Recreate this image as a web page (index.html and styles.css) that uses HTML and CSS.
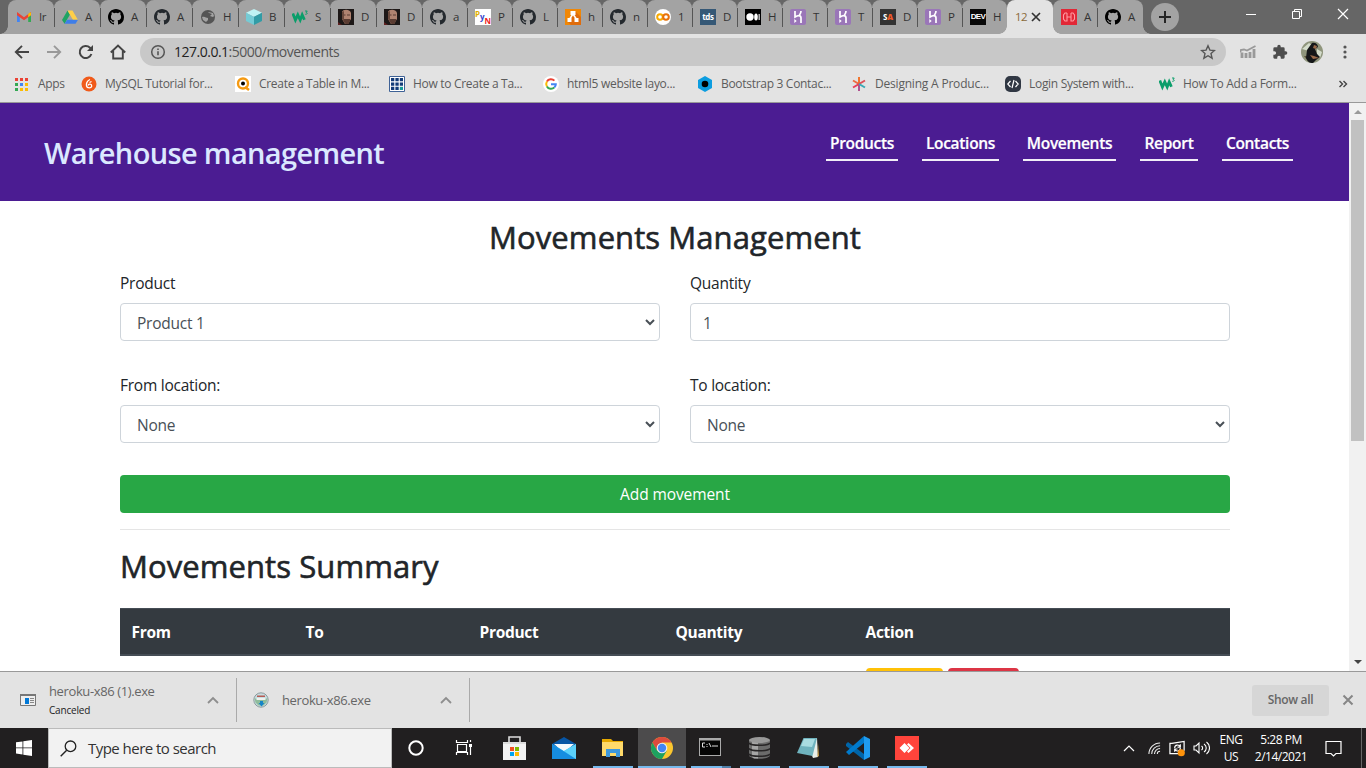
FILE: index.html
```html
<!DOCTYPE html>
<html lang="en">
<head>
<meta charset="utf-8">
<title>Warehouse management</title>
<link rel="stylesheet" href="styles.css">
</head>
<body>
<svg class="defs" aria-hidden="true">
  <symbol id="github" viewBox="0 0 16 16"><path d="M8 0C3.58 0 0 3.58 0 8c0 3.54 2.29 6.53 5.47 7.59.4.07.55-.17.55-.38 0-.19-.01-.82-.01-1.49-2.01.37-2.53-.49-2.69-.94-.09-.23-.48-.94-.82-1.13-.28-.15-.68-.52-.01-.53.63-.01 1.08.58 1.23.82.72 1.21 1.87.87 2.33.66.07-.52.28-.87.51-1.07-1.78-.2-3.64-.89-3.64-3.95 0-.87.31-1.59.82-2.15-.08-.2-.36-1.02.08-2.12 0 0 .67-.21 2.2.82a7.6 7.6 0 0 1 4 0c1.53-1.04 2.2-.82 2.2-.82.44 1.1.16 1.92.08 2.12.51.56.82 1.27.82 2.15 0 3.07-1.87 3.75-3.65 3.95.29.25.54.73.54 1.48 0 1.07-.01 1.93-.01 2.2 0 .21.15.46.55.38A8 8 0 0 0 16 8c0-4.42-3.58-8-8-8z"/></symbol>
  <symbol id="w3" viewBox="0 0 16 16"><path d="M.8 4.5 3.4 11 5.8 5.8 8.2 11l2-5.2 2.2 5" fill="none" stroke="#0a9e6a" stroke-width="2.8"/><path d="M13 2h2.2l-1 1.5c1.5.2 1.3 2-.9 1.8" fill="none" stroke="#0a9e6a"/></symbol>
  <symbol id="face" viewBox="0 0 16 16"><path fill="#1d1817" d="M0 0h16v16H0z"/><path fill="#b08370" d="M4 3C5 0 12 0 13 4v6l-3 5H7l-3-5z"/><path fill="#5a3c32" d="M5 10h7v2L10.500 15h-3L5 12zM5 5.500h2.500v1H5zm4 0h3v1H9z"/><path fill="#6b4a3d" d="M4 3v7l2 3V2z"/><path fill="#5d2020" d="m0 13 4 3H0z"/></symbol>
  <symbol id="heroku" viewBox="0 0 16 16"><rect width="16" height="16" rx="2" fill="#9a76b8"/><path d="M5 2v6c3-2 6-2 6 1v5M11 2c0 2-.7 3-1.500 4" fill="none" stroke="#fff" stroke-width="1.700"/><path d="m4.300 10 2.400 2-2.400 2z" fill="#fff"/></symbol>
  <symbol id="up" viewBox="0 0 12 8"><path d="m1 7 5-5 5 5" fill="none" stroke="#8e8e8e" stroke-width="1.800"/></symbol>
</svg>

<div class="tabstrip">
  <div class="tab lead"><svg viewBox="0 0 16 16"><path d="M1 4v9h2.800V7z" fill="#4285f4"/><path d="M15 4v9h-2.800V7z" fill="#34a853"/><path d="m1 3 7 5.200L15 3v3.200l-7 5-7-5z" fill="#ea4335"/><path d="m12.200 5 2-1.800L15 4v2.200l-2.800 2z" fill="#fbbc04"/></svg><span>Ir</span></div>
  <div class="tab"><svg viewBox="0 0 16 16"><path d="M5.500 1.500 0 11l2.600 3.800L8 5.500z" fill="#1fa463"/><path d="M5.500 1.500h5L16 11h-5z" fill="#ffcf48"/><path d="M5.200 10.700H16l-2.500 4.100h-11z" fill="#3f7ee8"/></svg><span>A</span></div>
  <div class="tab"><svg><use href="#github"/></svg><span>A</span></div>
  <div class="tab"><svg class="slate"><use href="#github"/></svg><span>A</span></div>
  <div class="tab"><svg viewBox="0 0 16 16"><circle cx="8" cy="8" r="7" fill="#555"/><path d="M2 8c3-1 4 1 6 1v2l-2 2-3-2zM8 3l1 1 3 1-2 2 3 1 1-1-1-3z" fill="#a3a3a3"/></svg><span>H</span></div>
  <div class="tab"><svg viewBox="0 0 16 16"><path d="m8 0 8 3.700L8 8 0 3.700z" fill="#bff3f4"/><path d="m0 3.700 8 4.100V16l-8-4z" fill="#75cbd5"/><path d="m16 3.700-8 4.100V16l8-4z" fill="#319ca6"/></svg><span>B</span></div>
  <div class="tab"><svg><use href="#w3"/></svg><span>S</span></div>
  <div class="tab"><svg><use href="#face"/></svg><span>D</span></div>
  <div class="tab"><svg><use href="#face"/></svg><span>D</span></div>
  <div class="tab n"><svg class="slate"><use href="#github"/></svg><span>a</span></div>
  <div class="tab n"><i class="fav pyn"><b>P</b><b>y</b><b>N</b></i><span>P</span></div>
  <div class="tab n"><svg class="slate"><use href="#github"/></svg><span>L</span></div>
  <div class="tab n"><svg viewBox="0 0 16 16"><path fill="#f08705" d="M0 0h16v16H0z"/><path fill="#df6c0c" d="m10 2 6 6v8H6l-3-3z"/><path d="m8 5-4 6m4-6 4 6" stroke="#fff" stroke-width="1.500"/><path d="M5.500 2h5v4h-5zM2.500 9h4v4h-4zm7 0h4v4h-4z" fill="#fff"/></svg><span>h</span></div>
  <div class="tab n"><svg class="slate"><use href="#github"/></svg><span>n</span></div>
  <div class="tab n"><svg viewBox="0 0 16 16"><circle cx="8" cy="8" r="8" fill="#fff"/><g fill="none" stroke-width="2"><circle cx="5" cy="8" r="2.800" stroke="#f9ab00"/><circle cx="11" cy="8" r="2.800" stroke="#e8710a"/></g></svg><span>1</span></div>
  <div class="tab n"><i class="fav tds">tds</i><span>D</span></div>
  <div class="tab n"><svg viewBox="0 0 16 16"><path d="M0 0h16v16H0z"/><g fill="#fff"><circle cx="5" cy="8" r="3.700"/><ellipse cx="11" cy="8" rx="1.800" ry="3.500"/><path d="M13.600 5h1.100v6h-1.100z"/></g></svg><span>H</span></div>
  <div class="tab n"><svg><use href="#heroku"/></svg><span>T</span></div>
  <div class="tab n"><svg><use href="#heroku"/></svg><span>T</span></div>
  <div class="tab n"><i class="fav sa">S<b>A</b></i><span>D</span></div>
  <div class="tab n"><svg><use href="#heroku"/></svg><span>P</span></div>
  <div class="tab n last"><i class="fav dev">DEV</i><span>H</span></div>
  <div class="tab active"><span class="url-title">12</span><svg class="close" viewBox="0 0 10 10"><path d="m1 1 8 8m0-8L1 9" stroke="#333" stroke-width="1.700"/></svg></div>
  <div class="tab m"><svg viewBox="0 0 16 16"><path fill="#e22736" d="M0 0h16v16H0z"/><path d="M6 4H4L2.500 6v4L4 12h2V4m4 0h2l1.500 2v4L12 12h-2V4M6 8h4" fill="none" stroke="#ff9aa0" stroke-width="1.100"/></svg><span>A</span></div>
  <div class="tab last tail"><svg><use href="#github"/></svg><span>A</span></div>
  <div class="newtab"><svg viewBox="0 0 14 14"><path d="M7 1v12M1 7h12" stroke="#252525" stroke-width="2"/></svg></div>
  <div class="winbtns">
    <svg viewBox="0 0 12 12"><path d="M1 6.500h10" stroke="#fff"/></svg>
    <svg viewBox="0 0 12 12"><path d="M1.500 3.500h7v7h-7zM3.500 3V1.500h7v7H9" fill="none" stroke="#fff"/></svg>
    <svg viewBox="0 0 12 12"><path d="m1 1 10 10M11 1 1 11" stroke="#fff" stroke-width="1.200"/></svg>
  </div>
</div>

<div class="toolbar">
  <svg class="nav" viewBox="0 0 16 16"><path d="M15 8H2m6-6.200L1.800 8 8 14.200" fill="none" stroke="#444" stroke-width="1.900"/></svg>
  <svg class="nav" viewBox="0 0 16 16"><path d="M1 8h13M8 1.800 14.200 8 8 14.200" fill="none" stroke="#999" stroke-width="1.900"/></svg>
  <svg class="nav" viewBox="0 0 16 16"><path d="M13.400 10A6 6 0 1 1 12 3.800L14 6" fill="none" stroke="#444" stroke-width="2"/><path d="M15 1v6H9z" fill="#444"/></svg>
  <svg class="nav home" viewBox="0 0 16 16"><path d="M.800 8.500 8 1.500l7.200 7M3.200 7v7.500h9.600V7" fill="none" stroke="#444" stroke-width="1.900"/></svg>
  <div class="omnibox">
    <svg viewBox="0 0 16 16"><circle cx="8" cy="8" r="6.300" fill="none" stroke="#555" stroke-width="1.500"/><path d="M7.200 7.200h1.600v4H7.200zm0-2.700h1.600V6H7.200z" fill="#555"/></svg>
    <span class="url"><b>127.0.0.1</b>:5000/movements</span>
    <svg class="star" viewBox="0 0 16 16"><path d="m8 1.800 1.900 4.300 4.600.4-3.500 3.100 1.100 4.600L8 11.700l-4.100 2.500L5 9.600 1.500 6.500l4.600-.4z" fill="none" stroke="#555" stroke-width="1.400"/></svg>
  </div>
  <svg class="ext" viewBox="0 0 16 16"><path d="M2 14V8.500M6 14V9M10 14V8M14 14V5" fill="none" stroke="#999" stroke-width="2.800"/><path d="M.500 8.500V6l3.500-.500L7 6.500 15.500 2" fill="none" stroke="#999" stroke-width="1.800"/></svg>
  <svg class="puzzle" viewBox="0 0 24 24"><path fill="#4d4d4d" d="M20.500 11H19V7a2 2 0 0 0-2-2h-4V3.500a2.500 2.500 0 0 0-5 0V5H4a2 2 0 0 0-2 2v3.800h1.500a2.700 2.700 0 0 1 0 5.400H2V20a2 2 0 0 0 2 2h3.800v-1.500a2.700 2.700 0 0 1 5.400 0V22H17a2 2 0 0 0 2-2v-4h1.500a2.500 2.500 0 0 0 0-5z"/></svg>
  <svg class="avatar" viewBox="0 0 22 22"><circle cx="11" cy="11" r="11" fill="#8f957c"/><path d="m1 8 7-6 5 3-5 5zm15 0 5 3-2 6-3-4z" fill="#d4dccb"/><path d="M3 15l4 5 5 2-4-7z" fill="#5a5136"/><path d="M11 2c3-1 6 1 6 4l-3 2 2 5 3 3-4 3-3 3c-4 0-5-1-7-5l1-8z" fill="#151719"/><path d="m13 4 3 1-1 3-3-1zM9 14l4 1 5 2-6 1z" fill="#9a6a49"/></svg>
  <svg class="dots" viewBox="0 0 4 16"><g fill="#555"><circle cx="2" cy="3" r="1.600"/><circle cx="2" cy="8" r="1.600"/><circle cx="2" cy="13" r="1.600"/></g></svg>
</div>

<div class="bookmarks">
  <div class="apps"><svg viewBox="0 0 13 13"><path fill="#ea4335" d="M0 0h3v3H0zm5 0h3v3H5zm5 0h3v3h-3z"/><path fill="#34a853" d="M0 5h3v3H0zm0 5h3v3H0z"/><path fill="#4285f4" d="M5 5h3v3H5z"/><path fill="#fbbc04" d="M10 5h3v3h-3zm0 5h3v3h-3zm-5 0h3v3H5z"/></svg><span>Apps</span></div>
  <div class="bm"><svg viewBox="0 0 16 16"><circle cx="8" cy="8" r="7.500" fill="#f05a1a"/><path d="M9 3.500C6 4.500 5 8 5.500 10c.5 2.500 5 2.500 5.200 0 .1-2.300-3.200-2.500-3.700-.5M8.500 6.500l2-1" fill="none" stroke="#fff" stroke-width="1.300"/></svg><span>MySQL Tutorial for...</span></div>
  <div class="bm"><svg viewBox="0 0 16 16"><path fill="#fff" d="M0 0h16v16H0z"/><circle cx="8" cy="7.500" r="5" fill="none" stroke="#f59a12" stroke-width="2.400"/><circle cx="8" cy="7.500" r="2"/><path d="m10 11 4 3" stroke="#f59a12" stroke-width="2.500"/></svg><span>Create a Table in M...</span></div>
  <div class="bm"><svg viewBox="0 0 16 16"><path fill="#fff" stroke="#3f6296" d="M.500.500h15v15H.500z"/><path fill="#133c78" d="M2 2h3.300v3.300H2zm4.400 0h3.300v3.300H6.400zm4.400 0H14v3.300h-3.200zM2 6.400h3.300v3.300H2zm4.400 0h3.300v3.300H6.400zm4.400 0H14v3.300h-3.200zM2 10.800h3.300V14H2zm4.400 0h3.300V14H6.400z"/><path fill="#159c99" d="M10.800 10.800H14V14h-3.200z"/></svg><span>How to Create a Ta...</span></div>
  <div class="bm"><svg viewBox="0 0 16 16"><circle cx="8" cy="8" r="8" fill="#fff"/><g fill="none" stroke-width="2"><path d="M3.900 5.500A4.800 4.800 0 0 1 11.400 4.600" stroke="#ea4335"/><path d="M3.900 5.500a5 5 0 0 0 0 5" stroke="#fbbc05"/><path d="M3.900 10.500a4.800 4.800 0 0 0 7.500.9" stroke="#34a853"/><path d="M11.400 11.400c1-1 1.400-2 1.400-3.100H8" stroke="#4285f4"/></g></svg><span>html5 website layo...</span></div>
  <div class="bm"><svg viewBox="0 0 16 16"><path d="m8 0 7 4v8l-7 4-7-4V4z" fill="#0c9de0"/><circle cx="8" cy="8" r="3.300"/></svg><span>Bootstrap 3 Contac...</span></div>
  <div class="bm"><svg viewBox="0 0 16 16"><g stroke-width="2"><path d="M8 7.500V1" stroke="#f0762f"/><path d="M8 8 2 4.500" stroke="#ed6b3f"/><path d="M8 8v7" stroke="#b0528f"/><path d="m8 8-6 3.500" stroke="#e83e59"/><path d="m8 8 6-3.500" stroke="#df4f56"/><path d="m8 8 6 3.500" stroke="#39a9b5"/></g></svg><span class="wide-text">Designing A Produc...</span></div>
  <div class="bm"><svg viewBox="0 0 16 16"><rect width="16" height="16" rx="5" fill="#303743"/><path d="M5.500 5 2.800 8l2.700 3m5-6 2.700 3-2.700 3M9 4l-2 8" fill="none" stroke="#fff" stroke-width="1.200"/></svg><span>Login System with...</span></div>
  <div class="bm"><svg><use href="#w3"/></svg><span>How To Add a Form...</span></div>
  <svg class="more" viewBox="0 0 9 8"><path d="m1 1 3 3-3 3m4-6 3 3-3 3" fill="none" stroke="#444" stroke-width="1.400"/></svg>
</div>

<div class="viewport">
  <div class="page">
    <header class="site-header">
      <h1>Warehouse management</h1>
      <nav><a class="n1">Products</a><a class="n2">Locations</a><a class="n3">Movements</a><a class="n4">Report</a><a class="n5">Contacts</a></nav>
    </header>
    <main>
      <h2 class="title">Movements Management</h2>
      <div class="form">
        <div class="field"><label>Product</label><div class="control select"><span>Product 1</span><svg viewBox="0 0 10 7"><path d="m1 1 4 4 4-4" fill="none" stroke="#495057" stroke-width="2"/></svg></div></div>
        <div class="field"><label>Quantity</label><div class="control"><span>1</span></div></div>
        <div class="field"><label>From location:</label><div class="control select"><span>None</span><svg viewBox="0 0 10 7"><path d="m1 1 4 4 4-4" fill="none" stroke="#495057" stroke-width="2"/></svg></div></div>
        <div class="field"><label>To location:</label><div class="control select"><span>None</span><svg viewBox="0 0 10 7"><path d="m1 1 4 4 4-4" fill="none" stroke="#495057" stroke-width="2"/></svg></div></div>
      </div>
      <div class="submit">Add movement</div>
      <h2 class="summary">Movements Summary</h2>
      <div class="thead"><span>From</span><span>To</span><span>Product</span><span>Quantity</span><span>Action</span></div>
      <div class="row"><div class="btn warn"></div><div class="btn danger"></div></div>
    </main>
  </div>
  <div class="scrollbar"><i class="arr upw"></i><i class="thumb"></i><i class="arr dnw"></i></div>
</div>

<div class="shelf">
  <div class="dl"><svg class="file" viewBox="0 0 16 12"><path d="M.500.500h15v11H.500z" fill="#eee" stroke="#777"/><path d="M0 0h16v2H0z" fill="#777"/><path d="M5 4h4v6H5z" fill="#0078d7"/><path d="M10 4.500h4M10 6.500h4M10 8.500h4" stroke="#888"/></svg><div class="info"><span>heroku-x86 (1).exe</span><small>Canceled</small></div><svg class="chev"><use href="#up"/></svg></div>
  <div class="dl second"><svg class="file disc" viewBox="0 0 16 16"><circle cx="8" cy="8" r="7.200" fill="#c7dce0" stroke="#8c9b9d"/><path d="M1.500 6.500h13l-1 4-3 3h-5l-3-3z" fill="#8fbc9c"/><path d="M4 3.500h8V5H4z" fill="#b65c54"/><path d="M3.500 6h9v2h-9z" fill="#edf2ef"/><path d="M7 9h3v2h1.500l-3 3.500-3-3.500H7z" fill="#1685c7"/></svg><div class="info"><span>heroku-x86.exe</span></div><svg class="chev"><use href="#up"/></svg></div>
  <div class="showall">Show all</div>
  <svg class="x" viewBox="0 0 12 12"><path d="m1.500 1.500 9 9m0-9-9 9" stroke="#868686" stroke-width="2"/></svg>
</div>

<div class="taskbar">
  <div class="start"><svg viewBox="0 0 16 16"><path d="m0 2.300 6.500-.9v6.100H0zM7.300 1.300 16 0v7.500H7.300zM0 8.300h6.500v6.200L0 13.600zm7.300 0H16V16l-8.700-1.300z" fill="#fff"/></svg></div>
  <div class="search"><svg viewBox="0 0 17 17"><circle cx="10.500" cy="6.300" r="5.300" fill="none" stroke="#222" stroke-width="1.300"/><path d="M6.700 10.200.7 16.200" stroke="#222" stroke-width="1.400"/></svg><span>Type here to search</span></div>
  <div class="app"><svg viewBox="0 0 24 24"><circle cx="12" cy="12" r="6.700" fill="none" stroke="#fff" stroke-width="2"/></svg></div>
  <div class="app"><svg viewBox="0 0 24 24"><path d="M5.500 8.500h9v7h-9zM4.500 4v2.500h11V4m-11 15v-2.500h11V19M18.500 4v2m0 5v8" fill="none" stroke="#fff" stroke-width="1.200"/><path d="M17 8h3v3h-3z" fill="#fff"/></svg></div>
  <div class="app"><svg viewBox="0 0 24 24"><path d="M7 7V1h11v6" fill="none" stroke="#ddd" stroke-width="1.600"/><path d="M1 6h23v18H1z" fill="#f3f3f3"/><path d="M1 6h23v2H1z" fill="#ddd"/><path d="M8 11h4v4H8z" fill="#f25022"/><path d="M13 11h4v4h-4z" fill="#7fba00"/><path d="M8 16h4v4H8z" fill="#00a4ef"/><path d="M13 16h4v4h-4z" fill="#ffb900"/></svg></div>
  <div class="app"><svg viewBox="0 0 24 24"><path d="m0 8 12-7 12 7-12 9z" fill="#0755a4"/><path d="M2 8h20l-10 9z" fill="#f5f8fb"/><path d="m0 8 12 7 12-7v15H0z" fill="#35b8f1"/><path d="m0 8 24 15H0z" fill="#168de0"/><path d="m12 15 12-7v15z" fill="#5bd1fa"/></svg></div>
  <div class="app open"><svg viewBox="0 0 24 24"><path d="M1 3h9l2 2h10v15H1z" fill="#e7a900"/><path d="M1 6h21v14H1z" fill="#ffda6a"/><path d="M5 13h14v8h-4v-4H9v4H5z" fill="#3e98dc"/></svg></div>
  <div class="app open current"><svg viewBox="0 0 24 24"><circle cx="12" cy="12" r="11" fill="#fbc62f"/><path d="M2.470 6.500A11 11 0 0 1 21.530 6.500H12L7.240 14.750z" fill="#dd4b3d"/><path d="M2.470 6.500A11 11 0 0 0 12 23l4.760-8.250H7.240z" fill="#1da160"/><circle cx="12" cy="12" r="5.300" fill="#eee"/><circle cx="12" cy="12" r="4.200" fill="#4285f4"/></svg></div>
  <div class="app open multi"><svg viewBox="0 0 24 24"><path d="M0 2h22v18H0z" fill="#aaa"/><path d="M1 4.500h20V19H1z" fill="#050505"/><path d="M6 7H3.500v4H6m2-3v1m0 1v1m2-4 2 4m1-1h6" fill="none" stroke="#ddd"/></svg></div>
  <div class="app open"><svg viewBox="0 0 24 24"><path d="M1 4h21v15c0 5-21 5-21 0z" fill="#6b6b6b"/><path d="M4 4h6v18.500H6L4 21z" fill="#a5a5a5"/><g fill="none" stroke="#272526" stroke-width="1.500"><path d="M1 7c2 3 19 3 21 0M1 12.500c2 3 19 3 21 0M1 18c2 3 19 3 21 0"/></g><ellipse cx="11.500" cy="4" rx="10.500" ry="3" fill="#999"/></svg></div>
  <div class="app open"><svg viewBox="0 0 24 24"><path d="M7 2h13l1 19-5 1z" fill="#e9eee9"/><path d="M6.500 2H20l-4.500 18L0 17z" fill="#6fb3be"/><path d="M7 3h11l-3 8-11-1z" fill="#a9dce1"/><path d="m21 7 1 13-1.500 1z" fill="#c49843"/></svg></div>
  <div class="app open"><svg viewBox="0 0 24 24"><path d="m0 8 2-2 16 12v6L0 10z" fill="#0065a9"/><path d="M0 16 18 0v7L3 19z" fill="#007acc"/><path d="m18 0 6 3v18l-6 3z" fill="#1f9cf0"/></svg></div>
  <div class="app open"><svg viewBox="0 0 24 24"><path d="M0 0h24v24H0z" fill="#ff443b"/><path d="m9.500 7 5 5-5 5-5-5zM13.500 7l5.500 5-5.500 5-1.500-1.500 3.500-3.500L12 8.500z" fill="#fff"/></svg></div>
  <div class="tray">
    <svg class="t1" viewBox="0 0 12 8"><path d="m1 7 5-5 5 5" fill="none" stroke="#fff" stroke-width="1.200"/></svg>
    <svg class="t2" viewBox="0 0 14 14"><g fill="none" stroke="#eee" stroke-width="1.100"><path d="M1 13A12 12 0 0 1 13 1M4 13a9 9 0 0 1 9-9M7 13a6 6 0 0 1 6-6M10 13a3 3 0 0 1 3-3"/></g></svg>
    <svg class="t3" viewBox="0 0 18 17"><path d="M3 3 16 1v10M3 14H1V3h2m0 11h7" fill="none" stroke="#fff" stroke-width="1.300"/><path d="M6 8c0-4 5-4 6-1m0-3v3H9m3 1c0 4-5 4-6 1m0 3V9h3" fill="none" stroke="#fff" stroke-width="1.200"/><circle cx="13" cy="13" r="3.800" fill="#ff930b"/></svg>
    <svg class="t4" viewBox="0 0 17 14"><path d="M1 5h2l3-3v10L3 9H1zM8.500 5c1.500 1 1.500 3 0 4M11 3c3 2 3 6 0 8m2.500-10c4 3 4 9 0 12" fill="none" stroke="#fff" stroke-width="1.100"/></svg>
    <div class="lang">ENG<br>US</div>
    <div class="clock">5:28 PM<br>2/14/2021</div>
    <svg class="t5" viewBox="0 0 17 17"><path d="M1 1.500h15v12h-5l-2.500 2.500L6 13.500H1z" fill="none" stroke="#fff" stroke-width="1.200"/></svg>
    <div class="peek"></div>
  </div>
</div>
</body>
</html>
```
FILE: styles.css
```css
* { box-sizing: border-box; }
body { margin: 0; width: 1366px; height: 768px; overflow: hidden; display: flex; flex-direction: column; font-family: "Open Sans", sans-serif; font-size: 12px; color: #212529; background: #fff; }
svg { display: block; flex: none; }
.defs { position: absolute; width: 0; height: 0; }

.tabstrip { height: 34px; flex: none; display: flex; background: #666; padding-left: 8px; }
.tab { position: relative; flex: none; width: 46px; height: 34px; padding: 0 0 0 8px; display: flex; align-items: center; gap: 7px; background: #a3a3a3; border-radius: 8px 8px 0 0; }
.tab.n { width: 45px; }
.tab.m { width: 44px; }
.tab svg, .fav { width: 16px; height: 16px; flex: none; }
.tab > span { width: 9px; padding-bottom: 1px; white-space: nowrap; font-size: 11.5px; color: #333; letter-spacing: -.5px; }
.tab::after { content: ""; position: absolute; right: -1px; top: 8px; width: 1px; height: 19px; background: #555; z-index: 1; }
.tab.last::after, .tab.active::after { display: none; }
.tab.lead::before, .tab.tail::before { content: ""; position: absolute; bottom: 0; left: -8px; width: 8px; height: 8px; background: radial-gradient(circle at 0 0, transparent 7.5px, #a3a3a3 8px); }
.tab.tail::before { left: auto; right: -8px; background: radial-gradient(circle at 100% 0, transparent 7.5px, #a3a3a3 8px); }
/* The selected tab flares out over its neighbours at the base. */
.tab.active { width: 46px; background: #e3e3e3; padding-left: 8px; z-index: 2; gap: 5px; }
.tab.active::before { content: ""; position: absolute; bottom: 0; left: -8px; right: -8px; height: 8px; background: radial-gradient(circle at 0 0, transparent 7.5px, #e3e3e3 8px) left / 8px 8px no-repeat, radial-gradient(circle at 100% 0, transparent 7.5px, #e3e3e3 8px) right / 8px 8px no-repeat; }
.tab .url-title { width: 11px; color: #8a6a3a; }
.tab .close { width: 10px; height: 10px; }
.slate { fill: #24292e; }
.fav { font-style: normal; text-align: center; line-height: 16px; overflow: hidden; }
.tds { background: #355876; color: #fff; font-size: 8px; font-weight: 700; letter-spacing: -.3px; }
.sa { background: #333; color: #fff; font-size: 8px; font-weight: 700; }
.sa b { color: #f05a28; }
.dev { background: #080808; color: #fff; font: 700 8px/16px "Liberation Sans", sans-serif; letter-spacing: -.6px; }
.pyn { display: flex; background: #fff; font-size: 8px; line-height: 9px; }
.pyn b { color: #e0b000; }
.pyn b:nth-child(2) { color: #3344cc; padding-top: 3px; }
.pyn b:nth-child(3) { color: #e22; padding-top: 7px; }
.newtab { width: 28px; height: 28px; margin: 3px 0 0 8px; border-radius: 50%; background: #a3a3a3; display: grid; place-items: center; }
.newtab svg { width: 14px; height: 14px; }
.winbtns { display: flex; margin-left: auto; padding: 8px 17px 0 0; gap: 34px; }
.winbtns svg { width: 12px; height: 12px; }

.toolbar { height: 36px; flex: none; background: #e3e3e3; display: flex; align-items: center; padding-left: 14px; }
.nav { width: 16px; height: 16px; margin-right: 16px; }
.nav.home { margin-right: 14px; }
.omnibox { width: 1086px; height: 28px; border-radius: 14px; background: #c8c8c8; display: flex; align-items: center; padding: 0 10px; gap: 8px; }
.omnibox svg { width: 16px; height: 16px; }
.url { font-size: 14px; line-height: 20px; color: #555; letter-spacing: -.5px; }
.url b { font-weight: 400; color: #222; }
.omnibox .star { margin-left: auto; }
.ext { width: 16px; height: 16px; margin-left: 14px; }
.puzzle { width: 16px; height: 16px; margin-left: 16px; }
.avatar { width: 22px; height: 22px; margin-left: 13px; }
.dots { width: 4px; height: 16px; margin-left: 20px; }

.bookmarks { height: 33px; flex: none; background: #e3e3e3; border-bottom: 1px solid #999; display: flex; align-items: center; padding: 0 18px 4px 15px; color: #5c5c5c; }
.apps { width: 66px; display: flex; align-items: center; gap: 10px; }
.apps svg { width: 13px; height: 13px; }
.bm { width: 154px; display: flex; align-items: center; gap: 8px; white-space: nowrap; }
.bm svg { width: 16px; height: 16px; }
.bookmarks span { letter-spacing: -.3px; padding-bottom: 1px; }
.bookmarks .wide-text { letter-spacing: -.2px; }
.more { width: 10px; height: 8px; margin-left: auto; }

.viewport { height: 568px; flex: none; display: flex; overflow: hidden; }
.page { width: 1349px; overflow: hidden; }
.site-header { height: 98px; background: #4b1c92; display: flex; justify-content: space-between; padding: 27px 56px 0 44px; }
.site-header h1 { margin: 0; font-size: 29px; line-height: 46px; font-weight: 600; color: #dbe8ff; letter-spacing: -.65px; white-space: nowrap; }
.site-header nav { display: flex; gap: 24px; height: 31px; }
.site-header a { border-bottom: 2px solid #f1eef7; color: #fff; font-size: 15.5px; line-height: 26px; font-weight: 600; text-align: center; letter-spacing: -.3px; white-space: nowrap; -webkit-text-stroke: .2px #fff; }
.n1 { width: 72px; } .n2 { width: 77px; } .n3 { width: 93px; } .n4 { width: 58px; } .n5 { width: 71px; }
main { padding: 0 119px 0 120px; }
h2 { margin: 0; font-size: 31px; line-height: 38px; font-weight: 400; letter-spacing: .08px; -webkit-text-stroke: .6px #212529; white-space: nowrap; }
.title { padding-top: 17px; text-align: center; }
.form { padding-top: 15px; display: grid; grid-template-columns: 540px 540px; column-gap: 30px; row-gap: 32px; }
.field { height: 70px; font-size: 15.5px; }
label { display: block; height: 32px; line-height: 25px; letter-spacing: -.25px; }
.control { height: 38px; border: 1px solid #ced4da; border-radius: 4px; padding: 0 4px 0 12px; display: flex; align-items: center; justify-content: space-between; color: #495057; letter-spacing: -.25px; }
.control span { padding-top: 2px; }
.control.select { padding-left: 16px; }
.control svg { width: 10px; height: 7px; }
.submit { margin-top: 32px; height: 38px; border-radius: 4px; background: #28a745; color: #fff; font-size: 15.5px; line-height: 38px; text-align: center; letter-spacing: -.1px; }
.summary { margin-top: 16px; border-top: 1px solid #e5e5e5; padding-top: 17px; }
.thead { margin-top: 23px; height: 48px; border: solid #454d55; border-width: 1px 0 2px; background: #343a40; color: #fff; font-size: 15.5px; font-weight: 700; line-height: 46px; letter-spacing: -.3px; display: grid; grid-template-columns: 174px 174px 196px 190px 1fr; padding-left: 11.5px; }
.row { padding: 12px 0 0 746px; display: flex; gap: 5px; }
.btn { height: 31px; border-radius: 4px; }
.warn { width: 77px; background: #ffc107; }
.danger { width: 71px; background: #dc3545; }
.scrollbar { width: 17px; background: #f1f1f1; display: flex; flex-direction: column; align-items: center; }
.arr { border: 4px solid transparent; width: 0; height: 0; }
.upw { border-bottom-color: #999; border-top: 0; margin: 7px 0 6px; }
.thumb { width: 13px; height: 321px; background: #c1c1c1; }
.dnw { border-top-color: #444; border-bottom: 0; margin: auto 0 7px; }

.shelf { height: 57px; flex: none; background: #e3e3e3; border-top: 1px solid #999; display: flex; align-items: center; color: #666; padding-right: 12px; }
.dl { width: 237px; height: 44px; border-right: 1px solid #aaa; display: flex; align-items: center; padding: 0 17px 0 20px; }
.dl.second { width: 233px; padding-left: 16px; }
.file { width: 16px; height: 12px; margin-right: 13px; }
.disc { height: 16px; }
.info { display: flex; flex-direction: column; white-space: nowrap; font-size: 13px; line-height: 20px; letter-spacing: -.38px; }
.info small { color: #222; font-size: 10px; line-height: 20px; margin-top: -1px; letter-spacing: -.2px; }
.chev { width: 12px; height: 8px; margin-left: auto; }
.showall { margin-left: auto; width: 77px; height: 31px; border-radius: 3px; background: #d6d6d6; font-weight: 600; line-height: 29px; text-align: center; letter-spacing: -.3px; }
.x { width: 12px; height: 12px; margin-left: 13px; }

.taskbar { height: 40px; flex: none; display: flex; background: #211f20; }
.start { width: 48px; display: grid; place-items: center; }
.start svg { width: 16px; height: 16px; }
.search { width: 344px; background: #f2f2f2; border: 1px solid #bbb; display: flex; align-items: center; gap: 11px; padding-left: 11px; font-size: 15px; color: #333; letter-spacing: -.53px; }
.search svg { width: 17px; height: 17px; }
.app { width: 48px; margin-right: 1px; display: grid; place-items: center; position: relative; }
.app:nth-child(3) { margin-right: 0; }
.app:nth-child(4), .app:nth-child(5) { margin-right: 2px; }
.app svg { width: 24px; height: 24px; }
.app.open::after { content: ""; position: absolute; left: 4px; right: 4px; bottom: 0; height: 2px; background: #76b9ed; }
.app.current { background: #4c4b4c; }
.app.current::after { left: 0; right: 0; }
.app.multi::after { background: linear-gradient(90deg, #76b9ed 31px, #4f7fa8 31px); }
.tray { margin-left: auto; display: flex; align-items: center; color: #fff; font-size: 12px; line-height: 17px; text-align: center; letter-spacing: -.5px; }
.t1 { width: 12px; height: 8px; margin-right: 13px; }
.t2 { width: 13px; height: 13px; margin-right: 8px; }
.t3 { width: 17px; height: 17px; margin-right: 7px; }
.t4 { width: 17px; height: 14px; margin-right: 8px; }
.lang { width: 26px; margin-right: 9px; }
.clock { width: 56px; margin-right: 16px; padding-bottom: 1px; white-space: nowrap; }
.t5 { width: 17px; height: 17px; margin-right: 19px; }
.peek { width: 5px; height: 40px; border-left: 1px solid #666; }
```
